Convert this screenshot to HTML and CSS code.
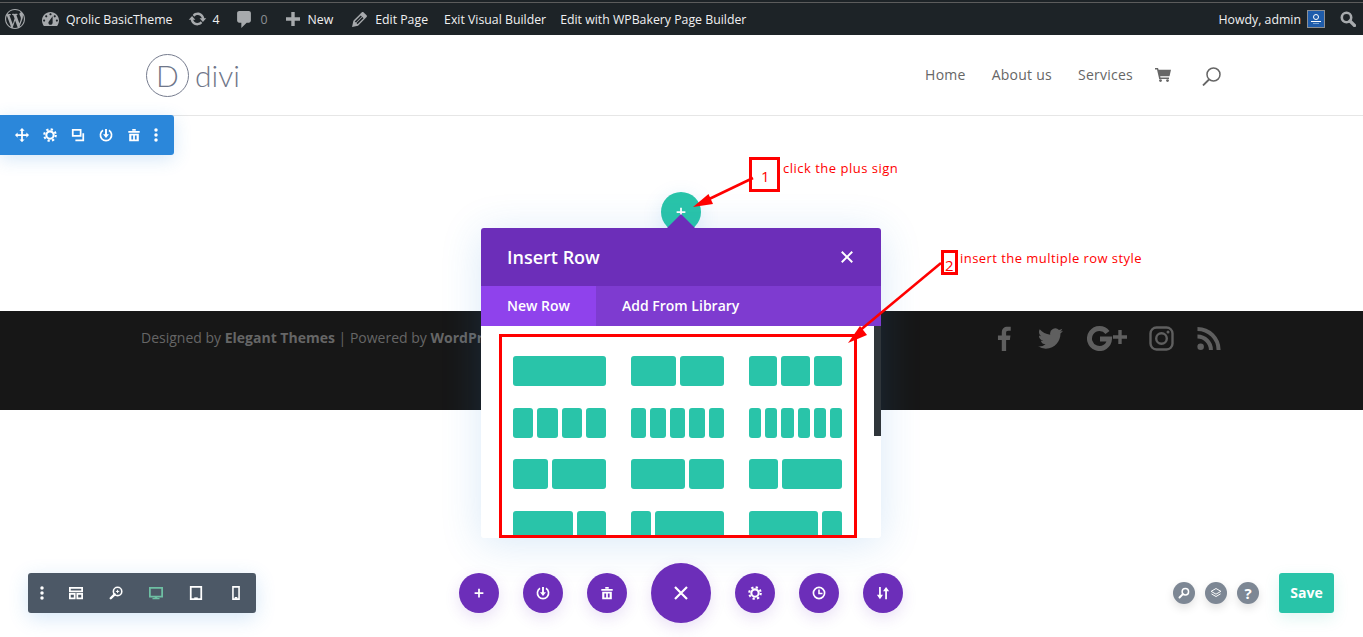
FILE: index.html
```html
<!DOCTYPE html>
<html lang="en">
<head>
<meta charset="utf-8">
<title>Insert Row</title>
<link rel="stylesheet" href="styles.css">
</head>
<body>
<svg class="defs" width="0" height="0" aria-hidden="true">
  <symbol id="i-move" viewBox="0 0 16 16"><path d="M8 1v14M1 8h14" fill="none" stroke="currentColor" stroke-width="2"/><path d="M8 0l3 3H5zM8 16l3-3H5zM0 8l3-3v6zM16 8l-3-3v6z" fill="currentColor"/></symbol>
  <symbol id="i-gear" viewBox="0 0 16 16"><circle cx="8" cy="8" r="4.2" fill="none" stroke="currentColor" stroke-width="2.4"/><circle cx="8" cy="8" r="6.6" fill="none" stroke="currentColor" stroke-width="2.4" stroke-dasharray="2.6 2.58"/></symbol>
  <symbol id="i-clone" viewBox="0 0 16 16"><path d="M2 2h9v7H2zM14 6v8H5" fill="none" stroke="currentColor" stroke-width="2"/></symbol>
  <symbol id="i-load" viewBox="0 0 16 16"><path d="M4.6 2.6a6.4 6.4 0 1 0 6.8 0" fill="none" stroke="currentColor" stroke-width="1.9"/><path d="M8 1v7" stroke="currentColor" stroke-width="2.2"/><path d="M4.6 7h6.8L8 11.4z" fill="currentColor"/></symbol>
  <symbol id="i-trash" viewBox="0 0 16 16"><path d="M1.5 3.5h13v2h-13zM6 1h4v2H6z" fill="currentColor"/><path fill-rule="evenodd" d="M2.5 6.5h11V15h-11zM5 8.5v4.5h2V8.5zM9 8.5v4.5h2V8.5z" fill="currentColor"/></symbol>
  <symbol id="i-dots" viewBox="0 0 16 16"><circle cx="8" cy="2.2" r="2" fill="currentColor"/><circle cx="8" cy="8" r="2" fill="currentColor"/><circle cx="8" cy="13.8" r="2" fill="currentColor"/></symbol>
  <symbol id="i-layout" viewBox="0 0 16 16"><path d="M1 2h14v4H1zM1 9h5.500v5H1zM9.500 9H15v5H9.500z" fill="none" stroke="currentColor" stroke-width="2"/></symbol>
  <symbol id="i-zoom" viewBox="0 0 16 16"><circle cx="9.800" cy="6.200" r="4.800" fill="none" stroke="currentColor" stroke-width="1.800"/><path d="M6.500 9.500l-4.500 4.500" stroke="currentColor" stroke-width="2.800" stroke-linecap="round"/><path d="M9.800 4.300v3.800M7.900 6.200h3.800" stroke="currentColor" stroke-width="1.100"/></symbol>
  <symbol id="i-search-small" viewBox="0 0 16 16"><circle cx="9.800" cy="6.200" r="4.300" fill="none" stroke="currentColor" stroke-width="2"/><path d="M6.500 9.500l-4.500 4.500" stroke="currentColor" stroke-width="2.600" stroke-linecap="round"/></symbol>
  <symbol id="i-desktop" viewBox="0 0 16 16"><path d="M1 2h14v10H1z" fill="none" stroke="currentColor" stroke-width="2"/><path d="M6.500 12h3v1.600H12V15H4v-1.400h2.500z" fill="currentColor"/></symbol>
  <symbol id="i-tablet" viewBox="0 0 16 16"><path d="M2 1h12v14H2z" fill="none" stroke="currentColor" stroke-width="2"/><path d="M6 13h4v2H6z" fill="currentColor"/></symbol>
  <symbol id="i-phone" viewBox="0 0 16 16"><path d="M4.500 1h7v14h-7z" fill="none" stroke="currentColor" stroke-width="1.800"/><path d="M6.500 12.600h3v2h-3z" fill="currentColor"/></symbol>
  <symbol id="i-plus" viewBox="0 0 16 16"><path d="M8 3v10M3 8h10" stroke="currentColor" stroke-width="2"/></symbol>
  <symbol id="i-close" viewBox="0 0 16 16"><path d="M2 2l12 12M14 2L2 14" stroke="currentColor" stroke-width="2.200"/></symbol>
  <symbol id="i-clock" viewBox="0 0 16 16"><circle cx="8" cy="8" r="6.400" fill="none" stroke="currentColor" stroke-width="1.900"/><path d="M8 4v4.500h4" fill="none" stroke="currentColor" stroke-width="1.800"/></symbol>
  <symbol id="i-sort" viewBox="0 0 16 16"><path d="M4.500 1v10M11.500 15V5" stroke="currentColor" stroke-width="2"/><path d="M1 10h7l-3.500 5zM8 6h7l-3.500-5z" fill="currentColor"/></symbol>
  <symbol id="i-layers" viewBox="0 0 16 16"><path d="M8 2l6.500 3.800L8 9.600 1.500 5.800z" fill="none" stroke="currentColor" stroke-width="1.300"/><path d="M2 9.200l6 3.500 6-3.500" fill="none" stroke="currentColor" stroke-width="1.300"/></symbol>
</svg>

<div class="top-line"></div>
<nav class="admin-bar">
  <div class="ab-group">
    <svg class="ab-wp" viewBox="0 0 20 20"><path fill-rule="evenodd" fill="currentColor" d="M20 10c0-5.510-4.490-10-10-10C4.480 0 0 4.490 0 10c0 5.520 4.480 10 10 10 5.510 0 10-4.480 10-10zM7.780 15.370L4.370 6.220c.55-.02 1.170-.08 1.170-.08.5-.06.44-1.130-.06-1.110 0 0-1.450.11-2.370.11-.18 0-.37 0-.58-.01C4.120 2.690 6.870 1.110 10 1.110c2.330 0 4.450.87 6.050 2.340-.68-.11-1.650.39-1.650 1.580 0 .74.45 1.360.9 2.100.35.61.55 1.360.55 2.460 0 1.490-1.400 5-1.400 5l-3.030-8.370c.54-.02.82-.17.82-.17.5-.05.44-1.250-.06-1.220 0 0-1.440.12-2.380.12-.87 0-2.330-.12-2.330-.12-.5-.03-.56 1.200-.06 1.220l.92.08 1.260 3.410zM17.410 10c.24-.64.74-1.870.43-4.250.7 1.290 1.050 2.710 1.050 4.250 0 3.290-1.730 6.240-4.400 7.780.97-2.590 1.940-5.200 2.920-7.780zM6.100 18.090C3.120 16.650 1.110 13.530 1.110 10c0-1.300.23-2.480.72-3.590C3.250 10.300 4.670 14.200 6.100 18.090zm4.030-6.630l2.580 6.980c-.86.29-1.760.45-2.710.45-.79 0-1.570-.11-2.290-.33.81-2.380 1.620-4.740 2.420-7.100z"/></svg>
    <span class="ab-item ab-site">
      <svg class="ab-ic" viewBox="2 3 16 13"><path fill-rule="evenodd" fill="currentColor" d="M3.760 16h12.480c1.100-1.370 1.760-3.110 1.760-5 0-4.420-3.580-8-8-8s-8 3.580-8 8c0 1.890.66 3.630 1.760 5zM10 4c.55 0 1 .45 1 1s-.45 1-1 1-1-.45-1-1 .45-1 1-1zM6 6c.55 0 1 .45 1 1s-.45 1-1 1-1-.45-1-1 .45-1 1-1zm8 0c.55 0 1 .45 1 1s-.45 1-1 1-1-.45-1-1 .45-1 1-1zm-5.370 5.550L12 7v6c0 1.100-.9 2-2 2s-2-.9-2-2c0-.57.24-1.080.63-1.450zM4 10c.55 0 1 .45 1 1s-.45 1-1 1-1-.45-1-1 .45-1 1-1zm12 0c.55 0 1 .45 1 1s-.45 1-1 1-1-.45-1-1 .45-1 1-1z"/></svg>
      Qrolic BasicTheme</span>
    <span class="ab-item ab-updates">
      <svg class="ab-ic ab-ic-updates" viewBox="0 3 20 14"><path fill="currentColor" d="M10.200 3.280c3.530 0 6.430 2.610 6.920 6h2.080l-3.500 4-3.500-4h2.320c-.45-1.970-2.210-3.440-4.320-3.440-1.450 0-2.730.71-3.540 1.780L4.950 5.660C6.230 4.200 8.110 3.280 10.200 3.280zm-.4 13.440c-3.520 0-6.430-2.610-6.920-6H.8l3.500-4c1.170 1.330 2.330 2.670 3.500 4H5.480c.45 1.970 2.210 3.440 4.320 3.440 1.450 0 2.730-.71 3.540-1.780l1.710 1.950c-1.280 1.460-3.150 2.390-5.250 2.390z"/></svg>
      4</span>
    <span class="ab-item ab-comments">
      <svg class="ab-ic ab-ic-comment" viewBox="3 2 13 16"><path fill="currentColor" d="M5 2h9c1.100 0 2 .9 2 2v7c0 1.100-.9 2-2 2h-2l-5 5v-5H5c-1.100 0-2-.9-2-2V4c0-1.100.9-2 2-2z"/></svg>
      <span class="ab-zero">0</span></span>
    <span class="ab-item ab-new">
      <svg class="ab-ic ab-ic-plus" viewBox="0 0 14 14"><path d="M7 0v14M0 7h14" stroke="currentColor" stroke-width="3.400"/></svg>
      New</span>
    <span class="ab-item ab-edit">
      <svg class="ab-ic ab-ic-pencil" viewBox="3 3 14 14"><path fill="currentColor" d="M13.890 3.390l2.710 2.720c.46.46.42 1.240.03 1.640l-8.010 8.020-5.560 1.160 1.160-5.580s7.600-7.630 7.990-8.030c.39-.39 1.220-.39 1.680.07zm-2.730 2.790l-5.590 5.610 1.110 1.110 5.540-5.650zm-2.970 8.230l5.580-5.600-1.070-1.080-5.590 5.600z"/></svg>
      Edit Page</span>
    <span class="ab-item ab-exit">Exit Visual Builder</span>
    <span class="ab-item ab-bakery">Edit with WPBakery Page Builder</span>
  </div>
  <div class="ab-group">
    <span class="ab-item ab-howdy">Howdy, admin</span>
    <span class="ab-avatar"><svg viewBox="0 0 16 16"><circle cx="8" cy="6" r="2.500" fill="none" stroke="#fff" stroke-width="1"/><path d="M3 10.500h10" stroke="#fff" stroke-width="1"/><path d="M5 12.500h6" stroke="#8fb4de" stroke-width=".8"/></svg></span>
    <svg class="ab-search" viewBox="0 0 16 16"><circle cx="6.500" cy="6.500" r="4.700" fill="none" stroke="currentColor" stroke-width="2.600"/><path d="M10 10l4.500 4.500" stroke="currentColor" stroke-width="3.200" stroke-linecap="round"/></svg>
  </div>
</nav>

<header class="site-header">
  <div class="logo">
    <span class="logo-mark">D</span>
    <span class="logo-word">divi</span>
  </div>
  <div class="menu">
    <a class="menu-link">Home</a>
    <a class="menu-link">About us</a>
    <a class="menu-link">Services</a>
    <svg class="cart" viewBox="0 0 16 14"><path fill="currentColor" d="M0 0h3l.6 1.800H16l-1.500 6.400H5.200l.3 1.300H14V11H4.200L2 1.500H0z"/><circle cx="5.500" cy="12.600" r="1.400" fill="currentColor"/><circle cx="12.500" cy="12.600" r="1.400" fill="currentColor"/></svg>
    <svg class="site-search" viewBox="0 0 19 19"><circle cx="11.500" cy="7.500" r="6.500" fill="none" stroke="currentColor" stroke-width="1.500"/><path d="M7 12.500L1 18.500" stroke="currentColor" stroke-width="1.800"/></svg>
  </div>
</header>

<main class="content"></main>

<footer class="site-footer">
  <p class="credits">Designed by <b>Elegant Themes</b> | Powered by <b>WordPress</b></p>
  <div class="social">
    <svg class="soc soc-f" viewBox="0 0 14 26"><path fill="currentColor" d="M9.200 26V14.500h3.900l.6-4.600H9.200V7.100c0-1.300.4-2.200 2.300-2.200H14V.9C13.600.8 12.200.7 10.600.7 7.100.7 4.700 2.800 4.700 6.700v3.200H.7v4.600h4V26z"/></svg>
    <svg class="soc soc-t" viewBox="0 2 24 20"><path fill="currentColor" d="M23.950 4.570a10 10 0 0 1-2.830.78 4.960 4.960 0 0 0 2.160-2.720c-.95.55-2 .96-3.130 1.190a4.920 4.920 0 0 0-8.380 4.480C7.690 8.100 4.070 6.130 1.640 3.160a4.820 4.820 0 0 0-.67 2.480c0 1.710.87 3.210 2.190 4.100a4.900 4.900 0 0 1-2.230-.62v.06a4.920 4.920 0 0 0 3.950 4.830 5 5 0 0 1-2.210.08 4.940 4.940 0 0 0 4.600 3.420A9.870 9.870 0 0 1 0 19.540a14 14 0 0 0 7.560 2.210c9.050 0 14-7.500 14-13.980 0-.21 0-.42-.02-.63a9.940 9.940 0 0 0 2.460-2.550z"/></svg>
    <svg class="soc soc-g" viewBox="0 0 40 25"><path d="M20.500 6.500A10 10 0 1 0 22.500 13H13" fill="none" stroke="currentColor" stroke-width="5"/><path d="M33 4v14M26 11h14" stroke="currentColor" stroke-width="3.400"/></svg>
    <svg class="soc soc-i" viewBox="0 0 25 25"><rect x="1.500" y="1.500" width="22" height="22" rx="6" fill="none" stroke="currentColor" stroke-width="2.400"/><circle cx="12.500" cy="12.500" r="5.300" fill="none" stroke="currentColor" stroke-width="2.400"/><circle cx="19" cy="6" r="1.500" fill="currentColor"/></svg>
    <svg class="soc soc-r" viewBox="0 0 25 25"><circle cx="3.800" cy="21" r="3.400" fill="currentColor"/><path d="M.5 10.500A14 14 0 0 1 14.500 24.500M.5 2.500A22 22 0 0 1 22.500 24.500" fill="none" stroke="currentColor" stroke-width="4.200"/></svg>
  </div>
</footer>

<!-- Row settings toolbar floating over the page -->
<div class="row-tools">
  <svg class="tool"><use href="#i-move"/></svg>
  <svg class="tool"><use href="#i-gear"/></svg>
  <svg class="tool"><use href="#i-clone"/></svg>
  <svg class="tool"><use href="#i-load"/></svg>
  <svg class="tool"><use href="#i-trash"/></svg>
  <svg class="tool tool-dots"><use href="#i-dots"/></svg>
</div>

<button class="add-btn"><svg class="add-plus"><use href="#i-plus"/></svg></button>

<section class="modal">
  <span class="modal-arrow"></span>
  <div class="modal-head">
    <h2 class="modal-title">Insert Row</h2>
    <svg class="modal-close"><use href="#i-close"/></svg>
  </div>
  <div class="modal-tabs">
    <span class="tab tab-active">New Row</span>
    <span class="tab">Add From Library</span>
  </div>
  <div class="modal-body">
    <div class="layouts">
      <div class="lay"><i class="f1"></i></div>
      <div class="lay"><i class="f1"></i><i class="f1"></i></div>
      <div class="lay"><i class="f1"></i><i class="f1"></i><i class="f1"></i></div>

      <div class="lay"><i class="f1"></i><i class="f1"></i><i class="f1"></i><i class="f1"></i></div>
      <div class="lay"><i class="f1"></i><i class="f1"></i><i class="f1"></i><i class="f1"></i><i class="f1"></i></div>
      <div class="lay"><i class="f1"></i><i class="f1"></i><i class="f1"></i><i class="f1"></i><i class="f1"></i><i class="f1"></i></div>

      <div class="lay"><i class="f35"></i><i class="f54"></i></div>
      <div class="lay"><i class="f54"></i><i class="f35"></i></div>
      <div class="lay"><i class="f29"></i><i class="f60"></i></div>

      <div class="lay"><i class="f60"></i><i class="f29"></i></div>
      <div class="lay"><i class="f20"></i><i class="f69"></i></div>
      <div class="lay"><i class="f69"></i><i class="f20"></i></div>
    </div>
    <span class="scrollbar"></span>
  </div>
</section>

<!-- Bottom builder bars -->
<div class="bottom-bars">
  <div class="view-tools">
    <svg class="vt vt-dots"><use href="#i-dots"/></svg>
    <svg class="vt"><use href="#i-layout"/></svg>
    <svg class="vt"><use href="#i-zoom"/></svg>
    <svg class="vt vt-on"><use href="#i-desktop"/></svg>
    <svg class="vt"><use href="#i-tablet"/></svg>
    <svg class="vt"><use href="#i-phone"/></svg>
  </div>
  <div class="actions">
    <span class="circle"><svg class="ci"><use href="#i-plus"/></svg></span>
    <span class="circle"><svg class="ci"><use href="#i-load"/></svg></span>
    <span class="circle"><svg class="ci"><use href="#i-trash"/></svg></span>
    <span class="circle circle-big"><svg class="ci-big"><use href="#i-close"/></svg></span>
    <span class="circle"><svg class="ci"><use href="#i-gear"/></svg></span>
    <span class="circle"><svg class="ci"><use href="#i-clock"/></svg></span>
    <span class="circle"><svg class="ci"><use href="#i-sort"/></svg></span>
  </div>
  <div class="saves">
    <span class="mini"><svg class="mi"><use href="#i-search-small"/></svg></span>
    <span class="mini"><svg class="mi"><use href="#i-layers"/></svg></span>
    <span class="mini mini-q">?</span>
    <button class="save">Save</button>
  </div>
</div>

<!-- Red tutorial annotations drawn over the screenshot -->
<svg class="notes" viewBox="0 0 1363 637">
  <rect x="500.500" y="335.500" width="355" height="201" fill="none" stroke="#f00" stroke-width="3"/>
  <rect x="750.500" y="158.500" width="28" height="32" fill="none" stroke="#f00" stroke-width="3"/>
  <rect x="942.500" y="251.500" width="14" height="22" fill="none" stroke="#f00" stroke-width="3"/>
  <path d="M753 178L705 201" stroke="#f00" stroke-width="2.500"/>
  <path d="M693 207L708.500 194L713 204z" fill="#f00"/>
  <path d="M941 263L858 332" stroke="#f00" stroke-width="2.500"/>
  <path d="M848 343L860 326L867 335z" fill="#f00"/>
</svg>
<span class="note note-1-num">1</span>
<span class="note note-1">click the plus sign</span>
<span class="note note-2-num">2</span>
<span class="note note-2">insert the multiple row style</span>
</body>
</html>
```

FILE: styles.css
```css
* { box-sizing: border-box; }
html, body { margin: 0; padding: 0; }
body {
  background: #fff;
  font-family: "Open Sans", "Liberation Sans", sans-serif;
  width: 1363px;
  height: 637px;
  overflow: hidden;
  position: relative;
}
.defs { position: absolute; }

.top-line { height: 3px; background: #1d2327; border-bottom: 1px solid #5c5c5c; }
.admin-bar {
  height: 32px;
  background: #1d2327;
  color: #f0f0f1;
  display: flex;
  justify-content: space-between;
  align-items: center;
  font-family: "Open Sans", sans-serif;
  font-size: 12.300px;
  padding: 0 7px 0 5px;
}
.ab-group { display: flex; align-items: center; }
.ab-item { display: flex; align-items: center; white-space: nowrap; }
.ab-ic { color: #a7aaad; flex: none; }
.ab-wp { width: 20px; height: 20px; color: #a7aaad; margin-right: 17px; }
.ab-site .ab-ic { width: 17px; height: 14px; margin-right: 7px; }
.ab-site { margin-right: 16px; }
.ab-ic-updates { width: 19px; height: 14px; margin-right: 5px; }
.ab-updates { margin-right: 18px; }
.ab-ic-comment { width: 14px; height: 17px; margin-right: 9px; }
.ab-zero { color: #8c8f94; }
.ab-comments { margin-right: 19px; }
.ab-ic-plus { width: 14px; height: 14px; margin-right: 7px; }
.ab-new { margin-right: 19px; }
.ab-ic-pencil { width: 15px; height: 15px; margin-right: 8px; }
.ab-edit { margin-right: 16px; }
.ab-exit { margin-right: 14px; }
.ab-howdy { margin-right: 6px; }
.ab-avatar { width: 18px; height: 18px; background: #1f5cab; border: 1px solid #8c8f94; display: block; }
.ab-avatar svg { display: block; width: 16px; height: 16px; }
.ab-search { width: 16px; height: 16px; color: #a7aaad; margin-left: 15px; }

.site-header {
  height: 81px;
  border-bottom: 1px solid #e6e6e6;
  display: flex;
  justify-content: space-between;
  align-items: center;
  padding: 0 142px 0 146px;
}
.logo { display: flex; align-items: center; color: #6f7689; }
.logo-mark {
  width: 43px; height: 43px;
  border: 1.300px solid #767c8e;
  border-radius: 50%;
  display: flex; align-items: center; justify-content: center;
  font-family: Lato, sans-serif;
  font-weight: 300;
  font-size: 30px;
  line-height: 1;
}
.logo-word {
  font-family: Lato, sans-serif;
  font-weight: 300;
  font-size: 30px;
  line-height: 1;
  margin-left: 6px;
}
.menu { display: flex; align-items: center; color: #666; }
.menu-link { font-size: 14px; font-weight: 500; letter-spacing: .25px; margin: 0 26px 2px 0; }
.menu-link:nth-child(3) { margin-right: 22px; }
.cart { width: 16px; height: 14px; margin-right: 31px; }
.site-search { width: 19px; height: 19px; margin-top: 2px; }

.content { height: 195px; }

.site-footer {
  height: 99px;
  background: #171717;
  color: #666;
  display: flex;
  justify-content: space-between;
  align-items: flex-start;
  padding: 14px 142px 0 141px;
}
.credits { margin: 0; font-size: 14px; line-height: 26px; white-space: nowrap; }
.social { display: flex; align-items: center; height: 26px; color: #5f5f5f; }
.soc { display: block; height: 25px; }
.soc-f { width: 14px; margin-right: 27px; }
.soc-t { width: 25px; height: 21px; margin-right: 24px; }
.soc-g { width: 40px; margin-right: 22px; }
.soc-i { width: 25px; margin-right: 23px; }
.soc-r { width: 24px; }

.row-tools {
  position: absolute;
  left: 0; top: 115px;
  width: 174px; height: 40px;
  background: #2b87da;
  border-radius: 0 3px 3px 0;
  box-shadow: 0 4px 18px rgba(43,135,218,.2);
  color: #fff;
  display: flex;
  align-items: center;
  padding-left: 15px;
  gap: 14px;
}
.tool { width: 14px; height: 14px; display: block; }
.tool-dots { margin-left: -6px; }

.add-btn {
  position: absolute;
  left: 661px; top: 192px;
  width: 40px; height: 40px;
  border: 0; padding: 0;
  border-radius: 50%;
  background: #29c4a9;
  color: #fff;
  box-shadow: 0 5px 20px rgba(43,135,218,.15);
}
.add-plus { position: absolute; left: 13px; top: 13px; width: 14px; height: 14px; }

.modal {
  position: absolute;
  left: 481px; top: 228px;
  width: 400px; height: 310px;
  border-radius: 3px;
  background: #fff;
  box-shadow: 0 5px 40px rgba(43,135,218,.18);
}
.modal-arrow {
  position: absolute;
  left: 186px; top: -14px;
  width: 0; height: 0;
  border-left: 14px solid transparent;
  border-right: 14px solid transparent;
  border-bottom: 14px solid #6c2eb9;
}
.modal-head {
  height: 58px;
  background: #6c2eb9;
  border-radius: 3px 3px 0 0;
  color: #fff;
  display: flex;
  align-items: center;
  justify-content: space-between;
  padding: 0 27px 0 26px;
}
.modal-title { margin: 0; font-size: 18px; font-weight: 600; }
.modal-close { width: 14px; height: 14px; }
.modal-tabs {
  height: 40px;
  background: #7e3bd0;
  color: #fff;
  display: flex;
  font-size: 14px;
  font-weight: 600;
  line-height: 40px;
}
.tab { padding: 0 26px; }
.tab-active { background: #8f42ec; }
.modal-body {
  position: relative;
  height: 212px;
  border-radius: 0 0 3px 3px;
  overflow: hidden;
  padding: 30px 0 0 32px;
}
.layouts {
  display: grid;
  grid-template-columns: repeat(3, 93px);
  grid-auto-rows: 30px;
  column-gap: 25px;
  row-gap: 21.600px;
}
.lay { display: flex; gap: 4px; }
.lay i { display: block; background: #29c4a9; border-radius: 3px; min-width: 0; }
.f1 { flex: 1 1 0; }
.f20 { flex: 20 1 0; }
.f29 { flex: 29 1 0; }
.f35 { flex: 35 1 0; }
.f54 { flex: 54 1 0; }
.f60 { flex: 60 1 0; }
.f69 { flex: 69 1 0; }
.scrollbar {
  position: absolute;
  right: 0; top: 0;
  width: 7px; height: 110px;
  background: #2f353a;
}

.bottom-bars {
  position: absolute;
  left: 28px; right: 29px; top: 563px;
  height: 60px;
  display: flex;
  align-items: center;
  justify-content: space-between;
}
.view-tools {
  width: 228px; height: 40px;
  background: #4c5866;
  border-radius: 3px;
  box-shadow: 0 5px 20px rgba(43,135,218,.2);
  color: #fff;
  display: flex;
  align-items: center;
  padding-left: 7px;
}
.vt { width: 14px; height: 14px; display: block; flex: none; margin-right: 26px; }
.vt-dots { margin-right: 20px; }
.vt-on { color: #6ebfa3; }
.actions { display: flex; align-items: center; gap: 24px; position: absolute; left: 431px; }
.circle {
  width: 40px; height: 40px;
  border-radius: 50%;
  background: #6c2eb9;
  color: #fff;
  box-shadow: 0 5px 15px rgba(108,46,185,.15);
  display: flex; align-items: center; justify-content: center;
}
.ci { width: 14px; height: 14px; display: block; }
.circle-big { width: 60px; height: 60px; }
.ci-big { width: 16px; height: 16px; display: block; }
.saves { display: flex; align-items: center; gap: 10px; }
.mini {
  width: 22px; height: 22px;
  border-radius: 50%;
  background: #7d8794;
  color: #fff;
  box-shadow: 0 4px 10px rgba(0,0,0,.12);
  display: flex; align-items: center; justify-content: center;
  font-size: 15px; font-weight: 700;
}
.mi { width: 12px; height: 12px; display: block; }
.save {
  width: 55px; height: 40px;
  margin-left: 10px;
  border: 0; padding: 0 0 2px;
  border-radius: 3px;
  background: #29c4a9;
  color: #fff;
  font: 700 14px "Open Sans", sans-serif;
  box-shadow: 0 5px 15px rgba(41,196,169,.15);
}

.notes { position: absolute; left: 0; top: 0; width: 1363px; height: 637px; pointer-events: none; }
.note {
  position: absolute;
  color: #f00;
  font-family: "Open Sans", sans-serif;
  font-size: 13px;
  line-height: 16px;
  white-space: nowrap;
}
.note-1 { left: 783px; top: 160px; letter-spacing: .500px; }
.note-2 { left: 960px; top: 250px; letter-spacing: .450px; }
.note-1-num { left: 761px; top: 168px; font-size: 15px; }
.note-2-num { left: 945px; top: 257px; font-size: 15px; }
```
